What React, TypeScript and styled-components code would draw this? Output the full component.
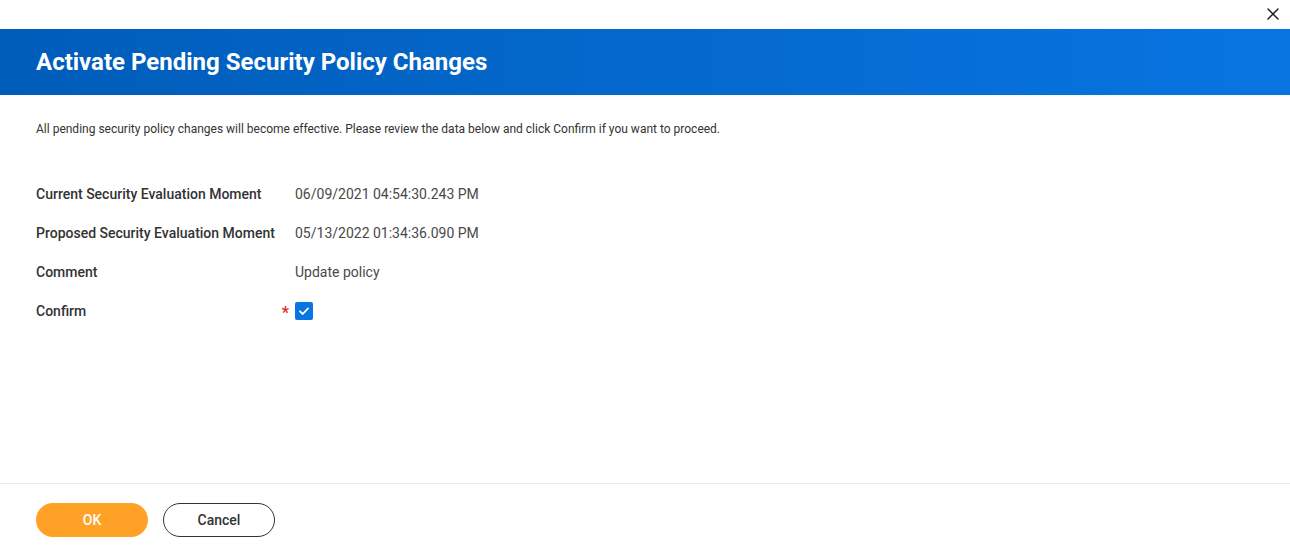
import React, { useState } from 'react';
import styled, { createGlobalStyle } from 'styled-components';

const GlobalStyle = createGlobalStyle`
  html, body {
    margin: 0;
    padding: 0;
    background: #ffffff;
    font-family: Roboto, "Liberation Sans", Arial, sans-serif;
    color: #333333;
  }
`;

const Page = styled.div`
  width: 1290px;
  height: 550px;
  display: flex;
  flex-direction: column;
  position: relative;
  overflow: hidden;
`;

const TopBar = styled.div`
  height: 29px;
  display: flex;
  justify-content: flex-end;
  align-items: center;
  padding-right: 7px;
`;

const CloseButton = styled.button`
  width: 20px;
  height: 20px;
  padding: 0;
  border: none;
  background: transparent;
  display: flex;
  align-items: center;
  justify-content: center;
  cursor: pointer;
  margin-top: -2px;
`;

const Header = styled.div`
  height: 66px;
  background: linear-gradient(90deg, #005cb9 0%, #0875e1 100%);
  display: flex;
  align-items: center;
  padding-left: 36px;
`;

const Title = styled.h1`
  margin: 0;
  font-size: 24px;
  font-weight: 700;
  color: #ffffff;
`;

const Body = styled.div`
  flex: 1;
  padding: 26px 36px 0;
`;

const Intro = styled.p`
  margin: 0 0 47px;
  font-size: 12px;
  line-height: 16px;
  color: #333333;
`;

const Fields = styled.div`
  display: grid;
  grid-template-columns: 259px 1fr;
  row-gap: 19px;
`;

const Label = styled.div`
  font-size: 14px;
  font-weight: 500;
  line-height: 20px;
  color: #333333;
  display: flex;
  justify-content: space-between;
  align-items: center;
  padding-right: 6px;
`;

const Value = styled.div`
  font-size: 14px;
  line-height: 20px;
  color: #494949;
  display: flex;
  align-items: center;
`;

const Required = styled.span`
  color: #de2e21;
  font-size: 16px;
  font-weight: 700;
  line-height: 1;
  margin-top: 4px;
`;

const CheckBox = styled.button<{ $checked: boolean }>`
  width: 18px;
  height: 18px;
  padding: 0;
  border-radius: 2px;
  border: ${p => (p.$checked ? 'none' : '1px solid #7b858f')};
  background: ${p => (p.$checked ? '#0875e1' : '#ffffff')};
  display: flex;
  align-items: center;
  justify-content: center;
  cursor: pointer;
`;

const Footer = styled.div`
  border-top: 1px solid #e8ebed;
  height: 67px;
  display: flex;
  align-items: center;
  gap: 15px;
  padding-left: 36px;
  box-sizing: border-box;
`;

const Button = styled.button<{ $primary?: boolean }>`
  width: 112px;
  height: 34px;
  border-radius: 17px;
  font-family: Roboto, "Liberation Sans", Arial, sans-serif;
  font-size: 14px;
  font-weight: 500;
  cursor: pointer;
  margin-top: 6px;
  border: ${p => (p.$primary ? 'none' : '1px solid #333333')};
  background: ${p => (p.$primary ? '#ffa126' : '#ffffff')};
  color: ${p => (p.$primary ? '#ffffff' : '#333333')};
`;

const rows = [
  { label: 'Current Security Evaluation Moment', value: '06/09/2021 04:54:30.243 PM' },
  { label: 'Proposed Security Evaluation Moment', value: '05/13/2022 01:34:36.090 PM' },
  { label: 'Comment', value: 'Update policy' },
];

export default function App() {
  const [confirmed, setConfirmed] = useState(true);

  return (
    <>
      <GlobalStyle />
      <Page>
        <TopBar>
          <CloseButton aria-label="Close">
            <svg width="12" height="12" viewBox="0 0 12 12">
              <path d="M1 1L11 11M11 1L1 11" stroke="#1e1e1e" strokeWidth="1.5" strokeLinecap="round" />
            </svg>
          </CloseButton>
        </TopBar>
        <Header>
          <Title>Activate Pending Security Policy Changes</Title>
        </Header>
        <Body>
          <Intro>
            All pending security policy changes will become effective. Please review the data below and click Confirm if you want to proceed.
          </Intro>
          <Fields>
            {rows.map(r => (
              <React.Fragment key={r.label}>
                <Label>{r.label}</Label>
                <Value>{r.value}</Value>
              </React.Fragment>
            ))}
            <Label>
              Confirm
              <Required>*</Required>
            </Label>
            <Value>
              <CheckBox $checked={confirmed} onClick={() => setConfirmed(!confirmed)} aria-label="Confirm">
                {confirmed && (
                  <svg width="14" height="14" viewBox="0 0 14 14">
                    <path d="M3 7.3L5.8 10L11 4.4" stroke="#ffffff" strokeWidth="1.8" fill="none" strokeLinecap="round" strokeLinejoin="round" />
                  </svg>
                )}
              </CheckBox>
            </Value>
          </Fields>
        </Body>
        <Footer>
          <Button $primary>OK</Button>
          <Button>Cancel</Button>
        </Footer>
      </Page>
    </>
  );
}
